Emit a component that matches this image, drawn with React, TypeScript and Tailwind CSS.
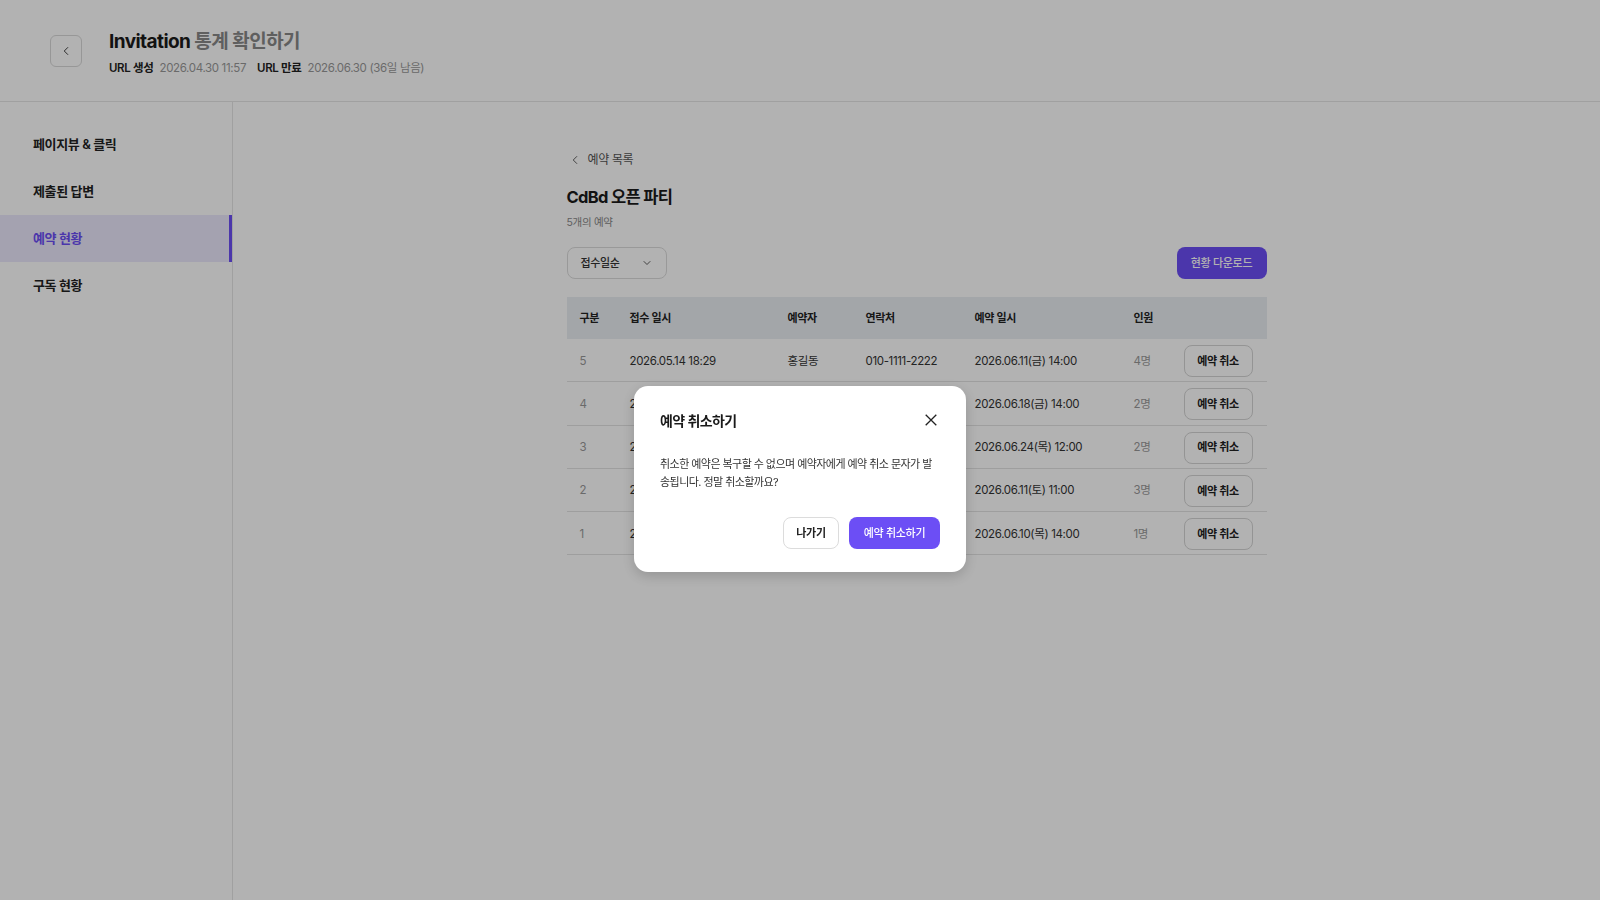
import { ChevronLeft, ChevronDown } from "lucide-react"

const rows = [
  { no: 5, applied: "2026.05.14 18:29", name: "홍길동", phone: "010-1111-2222", date: "2026.06.11(금) 14:00", count: "4명" },
  { no: 4, applied: "2026.05.12 10:02", name: "김영희", phone: "010-2222-3333", date: "2026.06.18(금) 14:00", count: "2명" },
  { no: 3, applied: "2026.05.09 15:44", name: "이철수", phone: "010-3333-4444", date: "2026.06.24(목) 12:00", count: "2명" },
  { no: 2, applied: "2026.05.03 09:17", name: "박민지", phone: "010-4444-5555", date: "2026.06.11(토) 11:00", count: "3명" },
  { no: 1, applied: "2026.05.01 20:31", name: "최지훈", phone: "010-5555-6666", date: "2026.06.10(목) 14:00", count: "1명" },
]

const menu = ["페이지뷰 & 클릭", "제출된 답변", "예약 현황", "구독 현황"]

const cols = "grid grid-cols-[50px_158px_78px_109px_159px_50px_1fr] items-center px-[13px]"

export default function App() {
  return (
    <div className="relative min-h-screen w-full bg-white text-[#222] font-['Inter','Noto_Sans_CJK_KR',sans-serif]">
      {/* header */}
      <header className="h-[102px] border-b border-[#e6e6e6] flex items-center pl-[50px]">
        <button className="w-8 h-8 rounded-md border border-[#d9d9d9] flex items-center justify-center text-[#333]">
          <ChevronLeft size={14} strokeWidth={1.6} />
        </button>
        <div className="ml-[27px] flex flex-col pt-[3px]">
          <h1 className="text-[19px] leading-7 font-bold tracking-[-0.03em] text-[#1a1a1a]">
            Invitation <span className="font-semibold text-[#888]">통계 확인하기</span>
          </h1>
          <div className="mt-[4px] flex items-center text-[11.5px] leading-4 tracking-[-0.03em]">
            <span className="font-semibold text-[#222]">URL 생성</span>
            <span className="ml-[6px] text-[#999]">2026.04.30 11:57</span>
            <span className="ml-[11px] font-semibold text-[#222]">URL 만료</span>
            <span className="ml-[6px] text-[#999]">2026.06.30 (36일 남음)</span>
          </div>
        </div>
      </header>

      <div className="flex min-h-[798px]">
        {/* sidebar */}
        <aside className="w-[233px] shrink-0 border-r border-[#e6e6e6] pt-[19px]">
          {menu.map((m) => {
            const active = m === "예약 현황"
            return (
              <div
                key={m}
                className={
                  active
                    ? "h-[47px] flex items-center pl-[33px] bg-[#ebe8fd] border-r-[3px] border-[#6c4ef5] text-[#6c4ef5] text-[13px] font-semibold tracking-[-0.03em]"
                    : "h-[47px] flex items-center pl-[33px] text-[#222] text-[13px] font-semibold tracking-[-0.03em]"
                }
              >
                {m}
              </div>
            )
          })}
        </aside>

        {/* main */}
        <main className="flex-1 pt-[48px]">
          <div className="w-[700px] mx-auto">
            <div className="h-5 flex items-center text-[12px] text-[#555] tracking-[-0.03em]">
              <ChevronLeft size={14} strokeWidth={1.6} className="ml-[1px]" />
              <span className="ml-[6px]">예약 목록</span>
            </div>
            <h2 className="mt-[14px] text-[16.5px] leading-[26px] font-bold tracking-[-0.04em] text-[#1a1a1a]">CdBd 오픈 파티</h2>
            <p className="mt-[5px] text-[10.5px] leading-4 text-[#888] tracking-[-0.03em]">5개의 예약</p>

            <div className="mt-[16px] flex items-center justify-between">
              <button className="w-[100px] h-8 rounded-lg border border-[#dcdcdc] flex items-center justify-between pl-[13px] pr-[13px] text-[11px] font-medium text-[#333] tracking-[-0.03em]">
                <span>접수일순</span>
                <ChevronDown size={12} strokeWidth={1.6} />
              </button>
              <button className="w-[90px] h-8 rounded-lg bg-[#6c4ef5] text-white text-[11px] font-medium tracking-[-0.03em]">
                현황 다운로드
              </button>
            </div>

            {/* table */}
            <div className="mt-[18px]">
              <div className={`${cols} h-[42px] bg-[#eaeef3] text-[11px] font-semibold text-[#222] tracking-[-0.03em]`}>
                <span>구분</span>
                <span>접수 일시</span>
                <span>예약자</span>
                <span>연락처</span>
                <span>예약 일시</span>
                <span>인원</span>
                <span />
              </div>
              {rows.map((r) => (
                <div key={r.no} className={`${cols} h-[43.3px] pt-[2px] border-b border-[#e3e3e3] text-[11.5px] text-[#333] tracking-[-0.03em]`}>
                  <span className="text-[#999]">{r.no}</span>
                  <span>{r.applied}</span>
                  <span>{r.name}</span>
                  <span>{r.phone}</span>
                  <span>{r.date}</span>
                  <span className="text-[#999]">{r.count}</span>
                  <button className="w-[69px] h-8 rounded-lg border border-[#d4d4d4] bg-white text-[11px] font-semibold text-[#222]">
                    예약 취소
                  </button>
                </div>
              ))}
            </div>
          </div>
        </main>
      </div>

      {/* dim + modal */}
      <div className="fixed inset-0 bg-black/30 flex justify-center items-start pt-[386px]">
        <div className="w-[332px] rounded-[14px] bg-white shadow-[0_4px_14px_rgba(0,0,0,0.18)] px-[26px] pt-6 pb-[23px]">
          <div className="flex items-center justify-between h-5">
            <h3 className="text-[14px] font-bold text-[#1a1a1a] tracking-[-0.04em]">예약 취소하기</h3>
            <svg width="12" height="12" viewBox="0 0 12 12" className="mr-[3px]">
              <path d="M0.7 0.7L11.3 11.3M11.3 0.7L0.7 11.3" stroke="#222" strokeWidth="1.3" fill="none" />
            </svg>
          </div>
          <p className="mt-[25px] text-[11px] leading-[18px] text-[#333] tracking-[-0.05em] whitespace-nowrap">
            취소한 예약은 복구할 수 없으며 예약자에게 예약 취소 문자가 발
            <br />
            송됩니다. 정말 취소할까요?
          </p>
          <div className="mt-[26px] flex justify-end gap-[10px]">
            <button className="w-[56px] h-8 rounded-lg border border-[#dcdcdc] bg-white text-[11px] font-semibold text-[#222] tracking-[-0.03em]">
              나가기
            </button>
            <button className="w-[91px] h-8 rounded-lg bg-[#6c4ef5] text-white text-[11px] font-medium tracking-[-0.03em]">
              예약 취소하기
            </button>
          </div>
        </div>
      </div>
    </div>
  )
}
